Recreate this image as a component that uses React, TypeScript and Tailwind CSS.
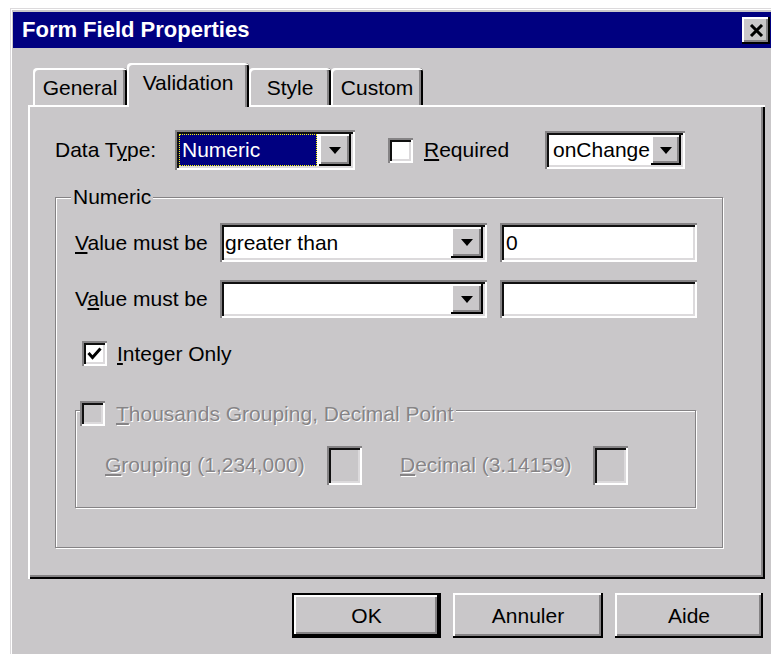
import React from "react";

const raised =
  "bg-[#c9c7c9] shadow-[inset_-2px_-2px_#000,inset_2px_2px_#fff,inset_-4px_-4px_#858385]";
const sunken =
  "shadow-[inset_2px_2px_#858385,inset_-2px_-2px_#fff,inset_4px_4px_#101010,inset_-4px_-4px_#dcdadc]";
const disabledText = "text-[#868486] [text-shadow:1px_1px_0_#fff]";

function Arrow() {
  return (
    <svg width="12" height="7" viewBox="0 0 12 7">
      <path d="M0 0 H12 L6 7 Z" fill="#000" />
    </svg>
  );
}

function DropButton({ w }: { w: string }) {
  return (
    <div className={`${raised} ${w} h-full flex items-center justify-center`}>
      <Arrow />
    </div>
  );
}

function Combo({
  width,
  height,
  children,
  btn,
}: {
  width: string;
  height: string;
  children?: React.ReactNode;
  btn: string;
}) {
  return (
    <div className={`${sunken} ${width} ${height} bg-white flex p-[4px]`}>
      <div className="flex-1 flex items-center overflow-hidden">{children}</div>
      <DropButton w={btn} />
    </div>
  );
}

function CheckBox({ checked, disabled }: { checked?: boolean; disabled?: boolean }) {
  return (
    <div
      className={`${sunken} w-[25px] h-[25px] ${disabled ? "bg-[#c9c7c9]" : "bg-white"} flex items-center justify-center`}
    >
      {checked && (
        <svg width="15" height="13" viewBox="0 0 15 13">
          <path d="M1.5 6 L5.5 10.5 L13.5 1.5" stroke="#000" strokeWidth="3" fill="none" />
        </svg>
      )}
    </div>
  );
}

function Tab({
  label,
  width,
  selected,
}: {
  label: string;
  width: string;
  selected?: boolean;
}) {
  return (
    <div
      className={`${width} ${
        selected ? "h-[44px] -mb-[2px] relative z-10" : "h-[37px]"
      } bg-[#c9c7c9] rounded-t-[4px] shadow-[inset_2px_2px_#fff,inset_-2px_0_#000,inset_-4px_0_#858385] flex justify-center pt-[8px] leading-[24px]`}
    >
      {label}
    </div>
  );
}

export default function App() {
  return (
    <div className="w-[771px] h-[654px] overflow-hidden bg-white pt-[8px] pl-[10px] font-['Liberation_Sans',Arial,sans-serif] text-[21px] text-black">
      <div className="w-[766px] h-[660px] bg-[#c9c7c9] shadow-[inset_1px_1px_#dcdadc,inset_2px_2px_#fff] pt-[4px] pl-[3px] pr-[3px]">
        {/* caption bar */}
        <div className="h-[36px] bg-[#000080] flex items-center justify-between pl-[9px] pr-[3px]">
          <span className="text-white font-bold text-[22px] leading-none">Form Field Properties</span>
          <div className={`${raised} w-[28px] h-[27px] flex items-center justify-center`}>
            <svg width="15" height="13" viewBox="0 0 15 13">
              <path d="M2 1 L13 12 M13 1 L2 12" stroke="#000" strokeWidth="3" />
            </svg>
          </div>
        </div>

        <div className="pl-[15px] pr-[8px]">
          {/* tab strip */}
          <div className="mt-[15px] h-[42px] flex items-end pl-[5px]">
            <Tab label="General" width="w-[94px]" />
            <Tab label="Validation" width="w-[122px]" selected />
            <Tab label="Style" width="w-[82px]" />
            <Tab label="Custom" width="w-[92px]" />
          </div>

          {/* tab page */}
          <div className="h-[474px] shadow-[inset_2px_2px_#fff,inset_-2px_-2px_#000,inset_-4px_-4px_#858385] pl-[27px] pt-[25px]">
            <div className="h-[40px] flex items-center">
              <div className="w-[120px]">
                Data T<span className="underline underline-offset-2">y</span>pe:
              </div>
              <Combo width="w-[180px]" height="h-[40px]" btn="w-[32px]">
                <div className="h-full w-full mr-[2px] bg-[#000080] border border-dotted border-[#ffff00] text-white flex items-center pl-[2px]">
                  Numeric
                </div>
              </Combo>
              <div className="ml-[33px]">
                <CheckBox />
              </div>
              <div className="ml-[11px] w-[121px]">
                <span className="underline underline-offset-2">R</span>equired
              </div>
              <Combo width="w-[140px]" height="h-[38px]" btn="w-[30px]">
                <span className="pl-[4px]">onChange</span>
              </Combo>
            </div>

            {/* Numeric group */}
            <div className="relative mt-[27px] w-[668px] h-[351px] border border-[#858385] shadow-[inset_1px_1px_#fff,1px_1px_#fff] pl-[19px] pt-[25px]">
              <div className="absolute -top-[13px] left-[15px] px-[2px] bg-[#c9c7c9] leading-[24px]">
                Numeric
              </div>

              <div className="flex items-center h-[39px]">
                <div className="w-[145px]">
                  <span className="underline underline-offset-2">V</span>alue must be
                </div>
                <Combo width="w-[267px]" height="h-[39px]" btn="w-[32px]">
                  <span className="pl-[1px]">greater than</span>
                </Combo>
                <div className={`${sunken} ml-[13px] w-[197px] h-[39px] bg-white flex items-center pl-[6px]`}>
                  0
                </div>
              </div>

              <div className="flex items-center h-[38px] mt-[18px]">
                <div className="w-[145px]">
                  V<span className="underline underline-offset-2">a</span>lue must be
                </div>
                <Combo width="w-[267px]" height="h-[38px]" btn="w-[32px]" />
                <div className={`${sunken} ml-[13px] w-[197px] h-[38px] bg-white`} />
              </div>

              <div className="flex items-center mt-[20px] pl-[7px]">
                <CheckBox checked />
                <div className="ml-[10px]">
                  <span className="underline underline-offset-2">I</span>nteger Only
                </div>
              </div>

              {/* Thousands sub-group */}
              <div className="relative mt-[40px] w-[621px] h-[98px] border border-[#858385] shadow-[inset_1px_1px_#fff,1px_1px_#fff] pl-[29px] pt-[35px]">
                <div className="absolute -top-[13px] left-[4px] pr-[3px] bg-[#c9c7c9] flex items-center">
                  <CheckBox disabled />
                  <div className={`ml-[11px] ${disabledText}`}>
                    <span className="underline underline-offset-2">T</span>housands Grouping, Decimal Point
                  </div>
                </div>
                <div className="flex items-center h-[39px]">
                  <div className={`w-[222px] ${disabledText}`}>
                    <span className="underline underline-offset-2">G</span>rouping (1,234,000)
                  </div>
                  <div className={`${sunken} w-[35px] h-[39px] bg-[#c9c7c9]`} />
                  <div className={`ml-[38px] w-[193px] ${disabledText}`}>
                    <span className="underline underline-offset-2">D</span>ecimal (3.14159)
                  </div>
                  <div className={`${sunken} w-[35px] h-[39px] bg-[#c9c7c9]`} />
                </div>
              </div>
            </div>
          </div>

          {/* dialog buttons */}
          <div className="mt-[14px] flex justify-end pr-[2px] gap-[12px]">
            <div className="w-[149px] h-[45px] border-2 border-black">
              <div className={`${raised} w-full h-full flex items-center justify-center`}>OK</div>
            </div>
            <div className={`${raised} w-[150px] h-[45px] flex items-center justify-center`}>Annuler</div>
            <div className={`${raised} w-[148px] h-[45px] flex items-center justify-center`}>Aide</div>
          </div>
        </div>
      </div>
    </div>
  );
}
